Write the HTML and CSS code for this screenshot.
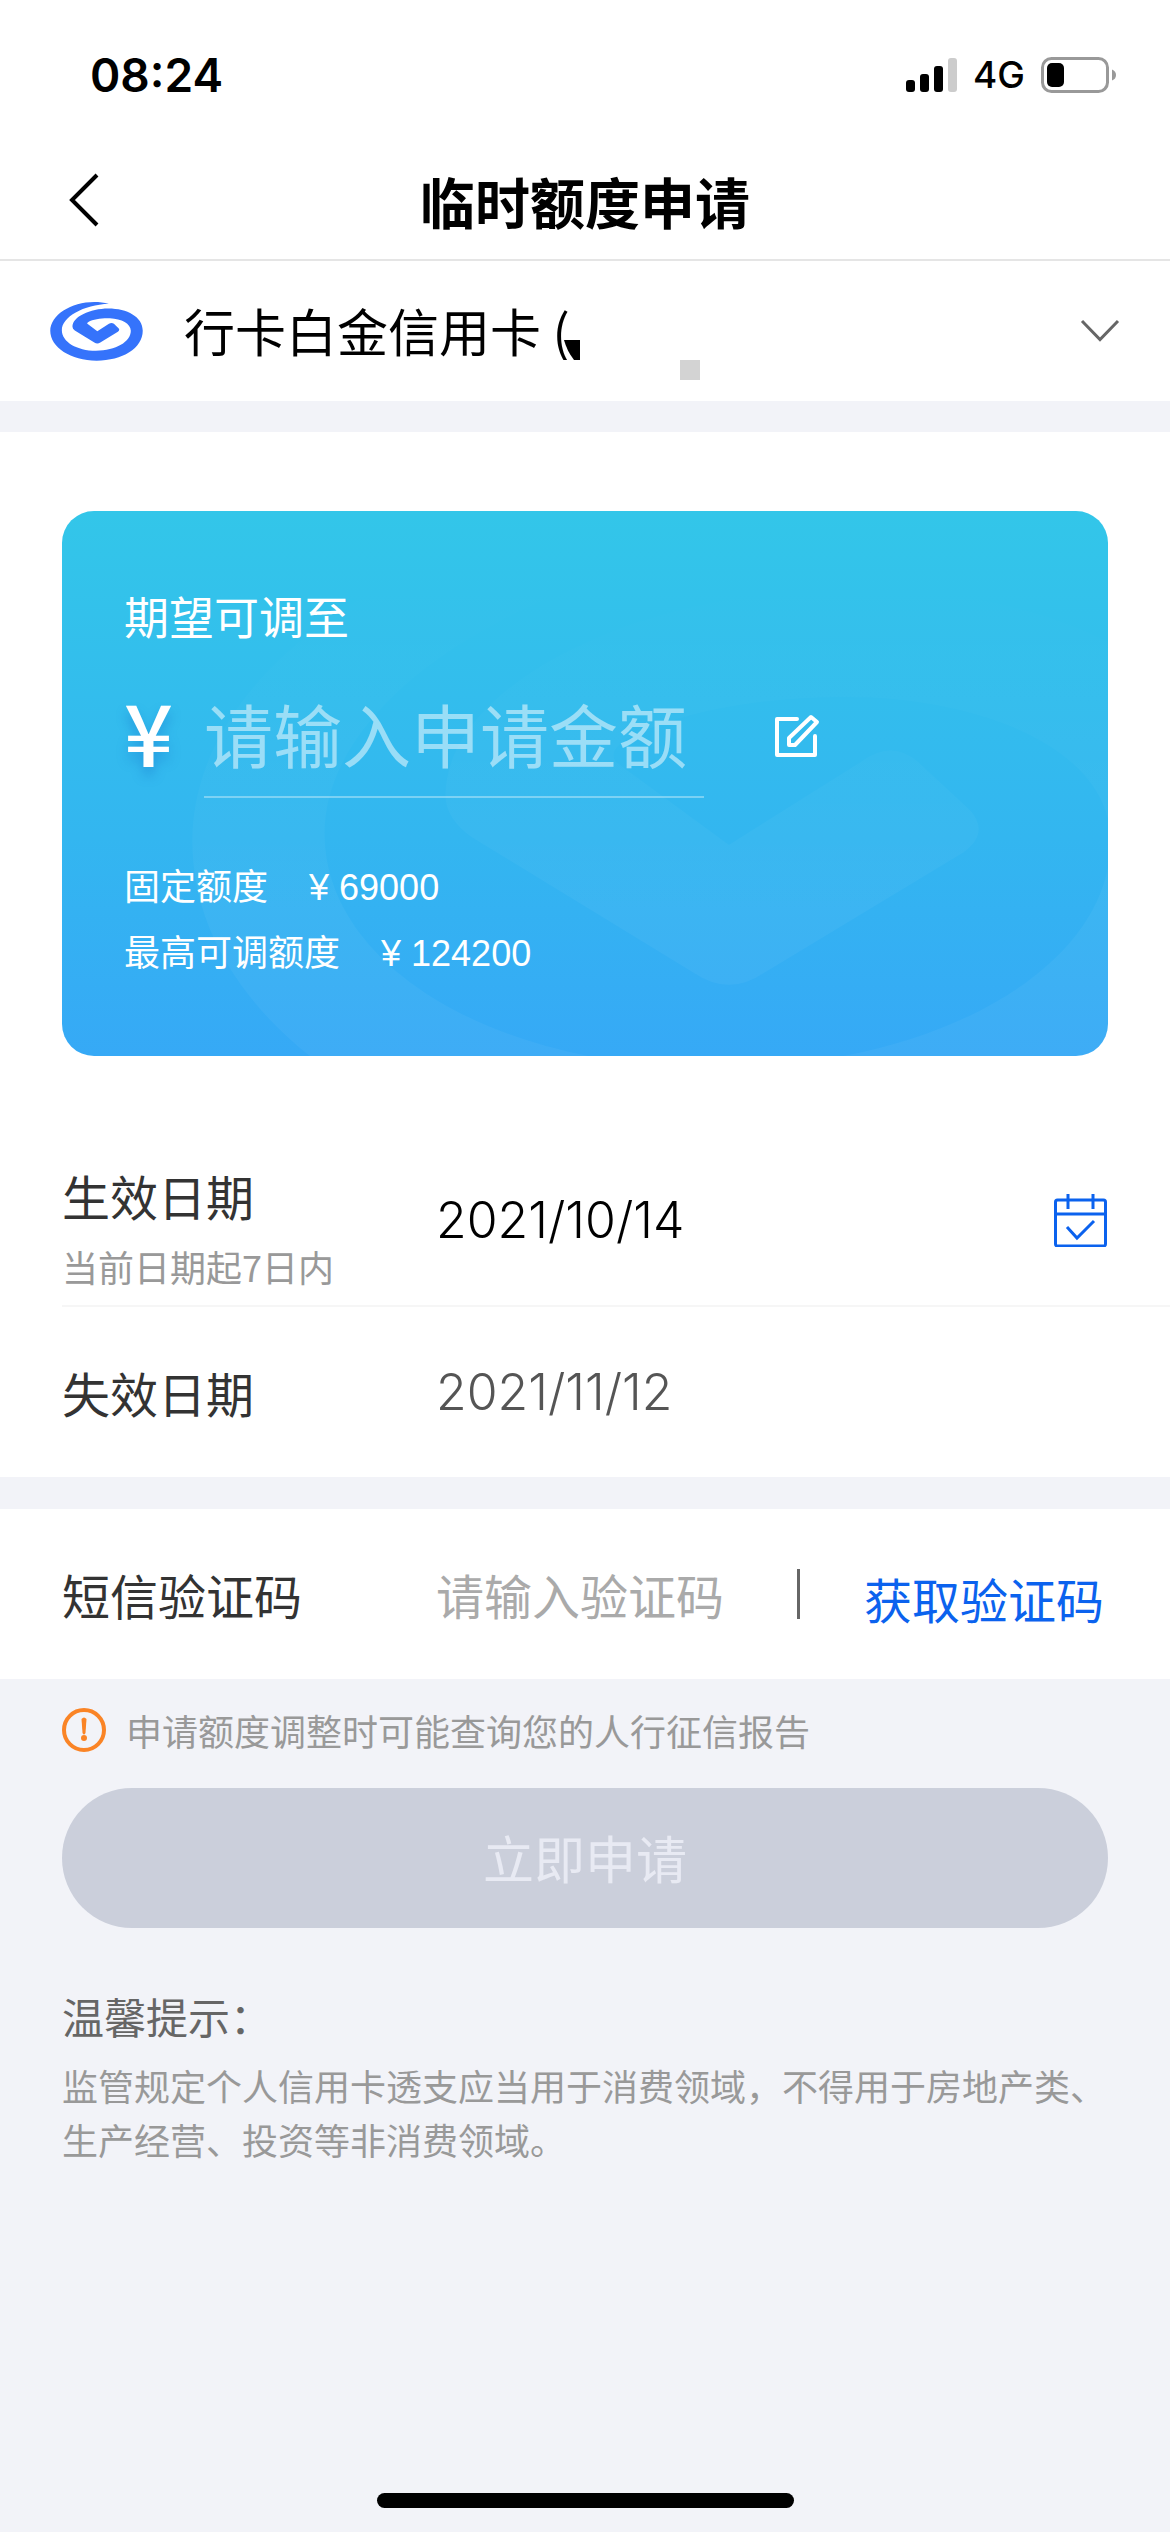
FILE: index.html
```html
<!DOCTYPE html>
<html lang="zh-CN">
<head>
  <meta charset="utf-8">
  <meta name="viewport" content="width=device-width, initial-scale=1">
  <title>临时额度申请</title>
  <link rel="stylesheet" href="styles.css">
</head>
<body>
  <svg class="defs" width="0" height="0" aria-hidden="true">
    <defs>
      <linearGradient id="fade" x1="0" y1="0" x2="0" y2="1">
        <stop offset="0.1" stop-color="#fff" stop-opacity="0"/>
        <stop offset="0.6" stop-color="#fff" stop-opacity="0.04"/>
      </linearGradient>
      <path id="swirl" d="M207 45C120 24 30 70 30 127C30 177 92 217 170 217C247 217 309 180 309 127C309 85 262 60 205 60C150 60 97 85 97 115Q97 121 104 126L163 162Q172 168 181 162L234 130Q241 125 236 119L222 106Q215 100 207 106L172 128L142 106Q140 103 145 100C160 92 185 88 210 89C245 91 273 105 273 127C273 160 228 187 168 187C110 187 65 160 65 125C65 85 130 48 207 45Z"/>
    </defs>
  </svg>

  <div class="page">
    <div class="status">
      <span class="status-time">08:24</span>
      <div class="status-right">
        <svg width="52" height="36" viewBox="0 0 52 36" aria-hidden="true">
          <rect x="0" y="23" width="9" height="12" rx="3"/>
          <rect x="14" y="17" width="9" height="18" rx="3"/>
          <rect x="28" y="9" width="9" height="26" rx="3"/>
          <rect x="42" y="1" width="9" height="34" rx="3" fill="#ccc"/>
        </svg>
        <span class="status-net">4G</span>
        <svg width="76" height="36" viewBox="0 0 76 36" aria-hidden="true">
          <rect x="1.5" y="1.5" width="65" height="33" rx="9" fill="none" stroke="#999" stroke-width="3"/>
          <rect x="6" y="6" width="17" height="24" rx="5"/>
          <path d="M71 12.500Q75 14 75 18T71 23.500Z" fill="#999"/>
        </svg>
      </div>
    </div>

    <header class="nav">
      <button class="icon-btn" type="button" aria-label="返回">
        <svg width="32" height="54" viewBox="0 0 32 54"><path d="M29 2L4 27L29 52" fill="none" stroke="#000" stroke-width="4"/></svg>
      </button>
      <h1 class="nav-title">临时额度申请</h1>
    </header>

    <main>
      <div class="account">
        <svg class="account-logo" viewBox="30 37 279 181" aria-hidden="true"><use href="#swirl" fill="#3573fb"/></svg>
        <div class="account-box">
          <select class="account-select" aria-label="信用卡">
            <option>行卡白金信用卡 (</option>
          </select>
          <svg class="mask-dark" width="16" height="20" viewBox="0 0 16 20" aria-hidden="true"><path d="M0 0H16V20H10Q3 11 0 0Z"/></svg>
          <span class="mask-light"></span>
        </div>
        <svg width="40" height="24" viewBox="0 0 40 24" aria-hidden="true"><path d="M2 2L20 20.500L38 2" fill="none" stroke="#666" stroke-width="3"/></svg>
      </div>

      <form>
        <section class="block limits">
          <div class="card">
            <svg class="card-mark" viewBox="30 37 279 181" aria-hidden="true"><use href="#swirl" fill="url(#fade)"/></svg>
            <label class="card-title" for="amount">期望可调至</label>
            <div class="amount">
              <span class="amount-sign">¥</span>
              <input class="amount-input" id="amount" type="text" inputmode="numeric" placeholder="请输入申请金额">
              <button class="icon-btn" type="button" aria-label="编辑">
                <svg width="46" height="46" viewBox="0 0 46 46" fill="none" stroke="#fff" stroke-width="4" stroke-linejoin="round" stroke-linecap="round">
                  <path d="M23 5H3V41H41V22"/>
                  <path d="M15 31V24L37 3L43 8L21 31Z"/>
                </svg>
              </button>
            </div>
            <dl class="facts">
              <div class="fact"><dt>固定额度</dt><dd>¥ 69000</dd></div>
              <div class="fact"><dt>最高可调额度</dt><dd>¥ 124200</dd></div>
            </dl>
          </div>

          <div class="row row-line">
            <div class="row-label">
              <label for="start">生效日期</label>
              <small class="hint">当前日期起7日内</small>
            </div>
            <input class="date" id="start" type="text" value="2021/10/14" readonly>
            <button class="icon-btn" type="button" aria-label="选择日期">
              <svg width="54" height="54" viewBox="0 0 54 54" fill="none" stroke="#0b62ee" stroke-width="3">
                <rect x="1.500" y="7" width="50" height="46" rx="2"/>
                <path d="M2 21H52M14 1V16M39 1V16M13 34L23 45L40 28"/>
              </svg>
            </button>
          </div>
          <div class="row">
            <label for="end">失效日期</label>
            <input class="date date-muted" id="end" type="text" value="2021/11/12" readonly>
          </div>
        </section>

        <section class="block sms">
          <div class="row row-sms">
            <label for="code">短信验证码</label>
            <input class="code" id="code" type="text" inputmode="numeric" placeholder="请输入验证码">
            <span class="bar"></span>
            <button class="code-btn" type="button">获取验证码</button>
          </div>
        </section>

        <section class="foot">
          <p class="notice">
            <svg width="44" height="44" viewBox="0 0 44 44" aria-hidden="true">
              <circle cx="22" cy="22" r="20" fill="none" stroke="#fa8426" stroke-width="4"/>
              <path d="M19.500 11Q22 8 24.500 11L23.500 25Q22 28 20.500 25Z" fill="#fa8426"/>
              <circle cx="22" cy="30" r="3" fill="#fa8426"/>
            </svg>
            <span>申请额度调整时可能查询您的人行征信报告</span>
          </p>
          <button class="submit" type="submit" disabled>立即申请</button>
          <h2 class="tips-title">温馨提示：</h2>
          <p class="tips">监管规定个人信用卡透支应当用于消费领域，不得用于房地产类、生产经营、投资等非消费领域。</p>
        </section>
      </form>
    </main>

    <div class="home"></div>
  </div>
</body>
</html>
```
FILE: styles.css
```css
* {
  box-sizing: border-box;
}

body {
  margin: 0;
  background: #f2f3f8;
  color: #333;
  font-family: "Noto Sans CJK SC", sans-serif;
  font-size: 48px;
  line-height: 60px;
}

h1, h2, p, dl, dd {
  margin: 0;
  font-weight: 400;
}

input, select, button {
  margin: 0;
  padding: 0;
  border: 0;
  border-radius: 0;
  background: none;
  color: inherit;
  font: inherit;
  outline: 0;
}

input {
  width: 100%;
  min-width: 0;
}

svg {
  display: block;
  flex: none;
}

.defs {
  position: absolute;
}

.page {
  display: flex;
  flex-direction: column;
  min-height: 100vh;
}

/* Status bar */
.status {
  display: flex;
  align-items: center;
  justify-content: space-between;
  height: 144px;
  padding: 5px 53px 0 90px;
  background: #fff;
  color: #000;
  font-family: Inter, sans-serif;
}

.status-time {
  font-size: 46px;
  font-weight: 600;
}

.status-right {
  display: flex;
  align-items: center;
}

.status-net {
  margin: 0 16px 0 15px;
  font-size: 37px;
  font-weight: 500;
}

/* Navigation bar */
.nav {
  display: grid;
  grid-template-columns: 1fr auto 1fr;
  align-items: center;
  height: 117px;
  padding: 0 68px 4px;
  border-bottom: 2px solid #e5e5e5;
  background: #fff;
  color: #000;
}

.nav-title {
  font-size: 55px;
  font-weight: 700;
}

.icon-btn {
  justify-self: start;
  cursor: pointer;
}

/* Card picker */
.account {
  display: flex;
  align-items: center;
  height: 140px;
  padding: 0 50px;
  background: #fff;
  color: #000;
}

.account-logo {
  width: 93px;
  height: 60px;
}

.account-box {
  position: relative;
  flex: 1;
  margin-left: 41px;
}

.account-select {
  display: block;
  width: 100%;
  height: 80px;
  padding-bottom: 2px;
  appearance: none;
  font-size: 51px;
}

.mask-dark {
  position: absolute;
  left: 380px;
  top: 49px;
}

.mask-light {
  position: absolute;
  left: 496px;
  top: 69px;
  width: 20px;
  height: 20px;
  background: #d3d3d3;
}

.block {
  background: #fff;
}

.limits {
  margin-top: 31px;
  padding-top: 79px;
}

/* Limit card */
.card {
  position: relative;
  margin: 0 62px 79px;
  padding: 75px 62px 69px;
  border-radius: 32px;
  background: linear-gradient(#33c6e9, #33b6f0 60%, #36a9f6);
  color: #fff;
  overflow: hidden;
}

.card-mark {
  position: absolute;
  left: 130px;
  top: -10px;
  width: 1055px;
  height: 684px;
}

.card-title {
  position: relative;
  display: block;
  font-size: 45px;
}

.amount {
  position: relative;
  display: flex;
  align-items: center;
  margin-top: 30px;
}

.amount-sign {
  width: 80px;
  padding-bottom: 14px;
  font-size: 86px;
  font-weight: 500;
  text-shadow: 0 8px 12px rgba(20, 110, 200, 0.4);
}

.amount-input {
  width: 500px;
  height: 122px;
  margin-right: 70px;
  padding-bottom: 6px;
  border-bottom: 2px solid rgba(255, 255, 255, 0.35);
  font-size: 69px;
}

.amount-input::placeholder {
  color: rgba(255, 255, 255, 0.5);
  opacity: 1;
}

.facts {
  position: relative;
  margin-top: 57px;
  font-family: "Liberation Sans", "Noto Sans CJK SC", sans-serif;
  font-size: 36px;
  line-height: 66px;
}

.fact {
  display: flex;
  gap: 41px;
}

/* Form rows */
.row {
  display: grid;
  grid-template-columns: 374px 1fr auto;
  align-items: center;
  min-height: 170px;
  margin-left: 62px;
  padding-right: 62px;
}

.row-line {
  min-height: 172px;
  border-bottom: 2px solid #f6f6f6;
}

.row-label {
  display: flex;
  flex-direction: column;
  align-self: end;
  gap: 14px;
  padding-bottom: 12px;
}

.hint {
  color: #999;
  font-size: 36px;
  line-height: 54px;
}

.date {
  color: #000;
  font-family: Inter, sans-serif;
  font-size: 50px;
  font-weight: 300;
}

.date-muted {
  color: #555;
}

.sms {
  margin-top: 32px;
}

.row-sms {
  grid-template-columns: 374px 1fr 3px auto;
  padding-right: 66px;
}

.code::placeholder {
  color: #aaa;
  opacity: 1;
}

.bar {
  height: 50px;
  background: #666;
}

.code-btn {
  margin-left: 64px;
  padding-top: 8px;
  color: #0b62ee;
  cursor: pointer;
}

/* Notice, submit and tips */
.foot {
  padding: 24px 62px 60px;
}

.notice {
  display: flex;
  align-items: center;
  gap: 20px;
  color: #999;
  font-size: 36px;
  line-height: 54px;
}

.submit {
  display: block;
  width: 100%;
  height: 140px;
  margin-top: 31px;
  padding-bottom: 2px;
  border-radius: 70px;
  background: #cbcfdb;
  color: #e8eaf3;
  font-size: 51px;
}

.tips-title {
  margin-top: 58px;
  color: #666;
  font-size: 42px;
}

.tips {
  margin-top: 12px;
  color: #999;
  font-size: 36px;
  line-height: 54px;
}

.home {
  width: 417px;
  height: 15px;
  margin: auto auto 24px;
  border-radius: 8px;
  background: #000;
}
```
